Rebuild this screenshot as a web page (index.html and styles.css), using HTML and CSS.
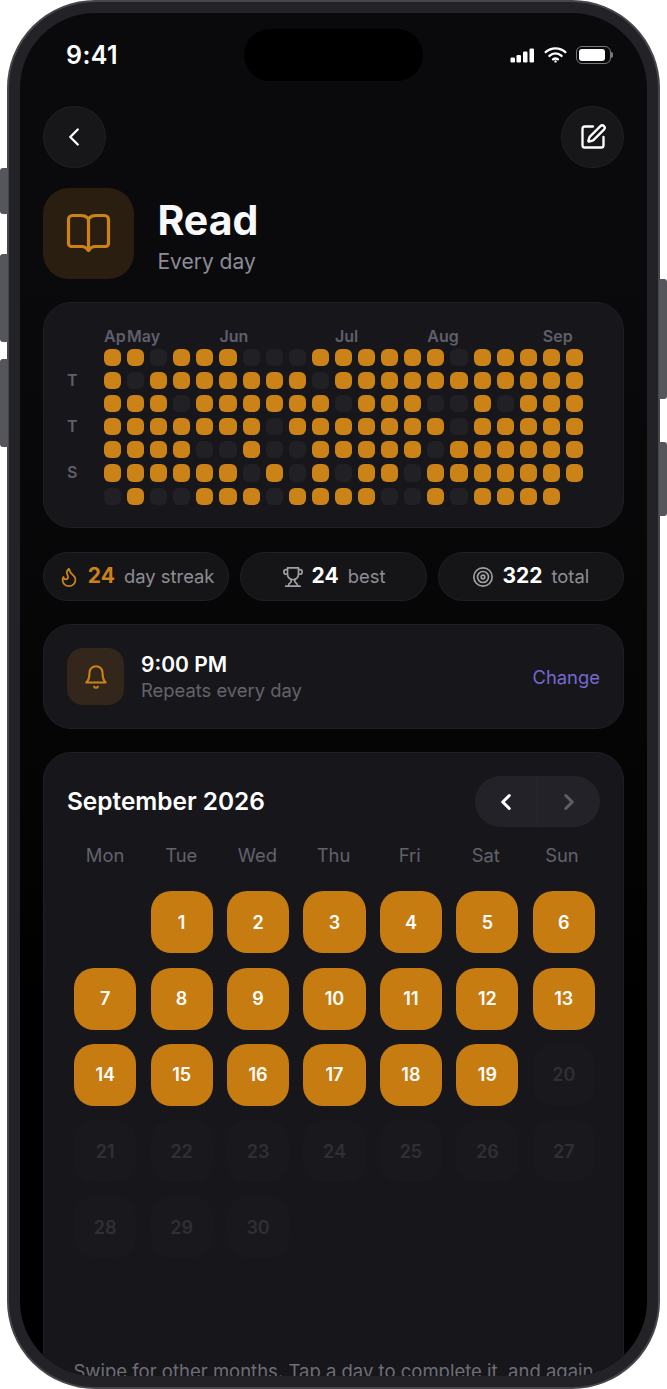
FILE: index.html
```html
<!DOCTYPE html>
<html>
<head>
    <meta charset="utf-8" />
    <meta name="viewport" content="width=device-width, initial-scale=1.0">
    <title>Read</title>
    <link rel="stylesheet" href="styles.css">
</head>
<body>
<div class="phone">
    <span class="side-btn side-mute"></span>
    <span class="side-btn side-vol-up"></span>
    <span class="side-btn side-vol-down"></span>
    <span class="side-btn side-power"></span>
    <span class="side-btn side-action"></span>

    <div class="screen">
        <div class="island"></div>

        <div class="status-bar">
            <span class="clock">9:41</span>
            <div class="status-icons">
                <svg class="signal" width="25" height="15" viewBox="0 0 25 15" fill="#fff">
                    <rect x="0.5" y="9.5" width="4.5" height="5" rx="1.2"/>
                    <rect x="6.5" y="7" width="4.5" height="7.5" rx="1.2"/>
                    <rect x="13" y="3.5" width="4.5" height="11" rx="1.2"/>
                    <rect x="19.5" y="0.5" width="4.5" height="14" rx="1.2"/>
                </svg>
                <svg class="wifi" width="23" height="16" viewBox="0 0 24 17" fill="none" stroke="#fff" stroke-width="2.4" stroke-linecap="round">
                    <path d="M1.5 5.5C7.5 0 16.5 0 22.5 5.5"/>
                    <path d="M5.5 9.5C9.5 6 14.5 6 18.5 9.5"/>
                    <path d="M9.3 13.2C11 12 13 12 14.7 13.2"/>
                    <circle cx="12" cy="15.3" r="0.6" fill="#fff" stroke-width="1.4"/>
                </svg>
                <div class="battery"><div class="battery-fill"></div></div>
            </div>
        </div>

        <div class="content">
            <div class="top-nav">
                <button class="round-btn">
                    <svg width="30" height="30" viewBox="0 0 24 24" fill="none" stroke="#fff" stroke-width="1.9" stroke-linecap="round" stroke-linejoin="round"><path d="m15 18-6-6 6-6"/></svg>
                </button>
                <button class="round-btn">
                    <svg width="28" height="28" viewBox="0 0 24 24" fill="none" stroke="#fff" stroke-width="2" stroke-linecap="round" stroke-linejoin="round"><path d="M12 3H5a2 2 0 0 0-2 2v14a2 2 0 0 0 2 2h14a2 2 0 0 0 2-2v-7"/><path d="M18.375 2.625a1 1 0 0 1 3 3l-9.013 9.014a2 2 0 0 1-.853.505l-2.873.84a.5.5 0 0 1-.62-.62l.84-2.873a2 2 0 0 1 .506-.852z"/></svg>
                </button>
            </div>

            <div class="hero">
                <div class="hero-icon">
                    <svg width="45" height="41" viewBox="0 0 45 41" fill="none" stroke="#cb8318" stroke-width="3.2" stroke-linejoin="round"><path d="M22.5 5.5C20.5 3.5 18 2.5 15 2.5H6.5A4 4 0 0 0 2.5 6.5V30.5A3 3 0 0 0 5.5 33.5H16C18.5 33.5 20.5 34.5 22.5 37.5C24.5 34.5 26.5 33.5 29 33.5H39.5A3 3 0 0 0 42.5 30.5V6.5A4 4 0 0 0 38.5 2.5H30C27 2.5 24.5 3.5 22.5 5.5ZM22.5 5.5V36"/></svg>
                </div>
                <div class="hero-text">
                    <h1 class="hero-title">Read</h1>
                    <div class="hero-sub">Every day</div>
                </div>
            </div>

            <div class="card heat-card">
                <div class="heat-months">
                    <span style="grid-column: 1">Ap</span>
                    <span style="grid-column: 2">May</span>
                    <span style="grid-column: 6">Jun</span>
                    <span style="grid-column: 11">Jul</span>
                    <span style="grid-column: 15">Aug</span>
                    <span style="grid-column: 20">Sep</span>
                </div>
                <div class="heat-body">
                    <div class="heat-days">
                        <span></span><span>T</span><span></span><span>T</span><span></span><span>S</span><span></span>
                    </div>
                    <div class="heat-grid">
                        <i class="on"></i><i class="on"></i><i></i><i class="on"></i><i class="on"></i><i class="on"></i><i></i><i></i><i></i><i class="on"></i><i class="on"></i><i class="on"></i><i class="on"></i><i class="on"></i><i class="on"></i><i></i><i class="on"></i><i class="on"></i><i class="on"></i><i class="on"></i><i class="on"></i>
                        <i class="on"></i><i></i><i class="on"></i><i class="on"></i><i class="on"></i><i class="on"></i><i class="on"></i><i class="on"></i><i class="on"></i><i></i><i class="on"></i><i class="on"></i><i class="on"></i><i class="on"></i><i class="on"></i><i class="on"></i><i class="on"></i><i class="on"></i><i class="on"></i><i class="on"></i><i class="on"></i>
                        <i class="on"></i><i class="on"></i><i class="on"></i><i></i><i class="on"></i><i class="on"></i><i class="on"></i><i class="on"></i><i class="on"></i><i class="on"></i><i></i><i class="on"></i><i class="on"></i><i class="on"></i><i></i><i></i><i class="on"></i><i></i><i class="on"></i><i class="on"></i><i class="on"></i>
                        <i class="on"></i><i class="on"></i><i class="on"></i><i class="on"></i><i class="on"></i><i class="on"></i><i class="on"></i><i></i><i class="on"></i><i class="on"></i><i class="on"></i><i class="on"></i><i class="on"></i><i class="on"></i><i class="on"></i><i></i><i class="on"></i><i class="on"></i><i class="on"></i><i class="on"></i><i class="on"></i>
                        <i class="on"></i><i class="on"></i><i class="on"></i><i class="on"></i><i></i><i></i><i class="on"></i><i></i><i></i><i class="on"></i><i class="on"></i><i class="on"></i><i class="on"></i><i class="on"></i><i></i><i class="on"></i><i class="on"></i><i class="on"></i><i class="on"></i><i class="on"></i><i class="on"></i>
                        <i class="on"></i><i class="on"></i><i class="on"></i><i class="on"></i><i class="on"></i><i class="on"></i><i></i><i class="on"></i><i></i><i class="on"></i><i></i><i class="on"></i><i class="on"></i><i></i><i class="on"></i><i class="on"></i><i class="on"></i><i class="on"></i><i class="on"></i><i class="on"></i><i class="on"></i>
                        <i></i><i class="on"></i><i></i><i></i><i class="on"></i><i class="on"></i><i class="on"></i><i></i><i class="on"></i><i class="on"></i><i class="on"></i><i class="on"></i><i></i><i></i><i class="on"></i><i></i><i class="on"></i><i class="on"></i><i class="on"></i><i class="on"></i>
                    </div>
                </div>
            </div>

            <div class="stats">
                <div class="stat">
                    <svg class="flame" width="22" height="22" viewBox="0 0 24 24" fill="none" stroke="#cb8318" stroke-width="1.9" stroke-linecap="round" stroke-linejoin="round"><path d="M8.5 14.5A2.5 2.5 0 0 0 11 12c0-1.38-.5-2-1-3-1.072-2.143-.224-4.054 2-6 .5 2.5 2 4.9 4 6.5 2 1.6 3 3.5 3 5.5a7 7 0 1 1-14 0c0-1.153.433-2.294 1-3a2.5 2.5 0 0 0 2.5 2.5z"/></svg>
                    <b class="stat-num stat-accent">24</b>
                    <span class="stat-label">day streak</span>
                </div>
                <div class="stat">
                    <svg width="22" height="22" viewBox="0 0 24 24" fill="none" stroke="#a0a0a5" stroke-width="1.8" stroke-linecap="round" stroke-linejoin="round"><path d="M6 9H4.5a2.5 2.5 0 0 1 0-5H6"/><path d="M18 9h1.5a2.5 2.5 0 0 0 0-5H18"/><path d="M4 22h16"/><path d="M10 14.66V17c0 .55-.47.98-.97 1.21C7.85 18.75 7 20.24 7 22"/><path d="M14 14.66V17c0 .55.47.98.97 1.21C16.15 18.75 17 20.24 17 22"/><path d="M18 2H6v7a6 6 0 0 0 12 0V2Z"/></svg>
                    <b class="stat-num">24</b>
                    <span class="stat-label">best</span>
                </div>
                <div class="stat">
                    <svg width="22" height="22" viewBox="0 0 24 24" fill="none" stroke="#a0a0a5" stroke-width="1.8"><circle cx="12" cy="12" r="10"/><circle cx="12" cy="12" r="6"/><circle cx="12" cy="12" r="2"/></svg>
                    <b class="stat-num">322</b>
                    <span class="stat-label">total</span>
                </div>
            </div>

            <div class="card reminder">
                <div class="reminder-icon">
                    <svg width="26" height="26" viewBox="0 0 24 24" fill="none" stroke="#cb8318" stroke-width="1.9" stroke-linecap="round" stroke-linejoin="round"><path d="M6 8a6 6 0 0 1 12 0c0 7 3 9 3 9H3s3-2 3-9"/><path d="M10.3 21a1.94 1.94 0 0 0 3.4 0"/></svg>
                </div>
                <div class="reminder-text">
                    <div class="reminder-time">9:00 PM</div>
                    <div class="reminder-sub">Repeats every day</div>
                </div>
                <a class="reminder-link">Change</a>
            </div>

            <div class="card calendar">
                <div class="cal-head">
                    <h2 class="cal-title">September 2026</h2>
                    <div class="cal-nav">
                        <button class="cal-arrow">
                            <svg width="26" height="26" viewBox="0 0 24 24" fill="none" stroke="#fff" stroke-width="2.8" stroke-linecap="round" stroke-linejoin="round"><path d="m15 18-6-6 6-6"/></svg>
                        </button>
                        <button class="cal-arrow cal-arrow-next">
                            <svg width="26" height="26" viewBox="0 0 24 24" fill="none" stroke="#5e5e64" stroke-width="2.8" stroke-linecap="round" stroke-linejoin="round"><path d="m9 18 6-6-6-6"/></svg>
                        </button>
                    </div>
                </div>
                <div class="cal-week">
                    <span>Mon</span><span>Tue</span><span>Wed</span><span>Thu</span><span>Fri</span><span>Sat</span><span>Sun</span>
                </div>
                <div class="cal-grid">
                    <div class="day-blank"></div>
                    <div class="day done">1</div>
                    <div class="day done">2</div>
                    <div class="day done">3</div>
                    <div class="day done">4</div>
                    <div class="day done">5</div>
                    <div class="day done">6</div>
                    <div class="day done">7</div>
                    <div class="day done">8</div>
                    <div class="day done">9</div>
                    <div class="day done">10</div>
                    <div class="day done">11</div>
                    <div class="day done">12</div>
                    <div class="day done">13</div>
                    <div class="day done">14</div>
                    <div class="day done">15</div>
                    <div class="day done">16</div>
                    <div class="day done">17</div>
                    <div class="day done">18</div>
                    <div class="day done">19</div>
                    <div class="day">20</div>
                    <div class="day">21</div>
                    <div class="day">22</div>
                    <div class="day">23</div>
                    <div class="day">24</div>
                    <div class="day">25</div>
                    <div class="day">26</div>
                    <div class="day">27</div>
                    <div class="day">28</div>
                    <div class="day">29</div>
                    <div class="day">30</div>
                    <div class="day-blank"></div>
                    <div class="day-blank"></div>
                    <div class="day-blank"></div>
                    <div class="day-blank"></div>
                    <div class="day-blank"></div>
                </div>
                <p class="cal-hint">Swipe for other months. Tap a day to complete it, and again to undo.</p>
            </div>
        </div>
    </div>
</div>
</body>
</html>
```

FILE: styles.css
```css
* {
    box-sizing: border-box;
}
body {
    margin: 0;
    background: #fff;
    font-family: Inter, "Liberation Sans", sans-serif;
    color: #fff;
}
button {
    border: none;
    padding: 0;
    background: none;
    font: inherit;
}
h1, h2, p {
    margin: 0;
}

/* device frame */
.phone {
    position: relative;
    width: 653px;
    height: 1389px;
    margin-left: 7px;
    padding: 11px;
    border: 2px solid #46464c;
    border-radius: 88px;
    background: #232327;
}
.side-btn {
    position: absolute;
    width: 8px;
    background: #55555c;
}
.side-mute {
    left: -9px;
    top: 166px;
    height: 46px;
    border-radius: 3px 0 0 3px;
}
.side-vol-up {
    left: -9px;
    top: 252px;
    height: 88px;
    border-radius: 3px 0 0 3px;
}
.side-vol-down {
    left: -9px;
    top: 357px;
    height: 88px;
    border-radius: 3px 0 0 3px;
}
.side-power {
    right: -9px;
    top: 277px;
    height: 120px;
    border-radius: 0 3px 3px 0;
}
.side-action {
    right: -9px;
    top: 440px;
    height: 74px;
    border-radius: 0 3px 3px 0;
}
.screen {
    position: relative;
    height: 100%;
    overflow: hidden;
    border-radius: 75px;
    background: linear-gradient(#0a0a0c 0, #0a0a0c 240px, #040405 800px, #000 1000px);
}
.island {
    position: absolute;
    left: 224px;
    top: 16px;
    width: 179px;
    height: 52px;
    border-radius: 26px;
    background: #000;
}

/* status bar */
.status-bar {
    display: flex;
    align-items: center;
    justify-content: space-between;
    height: 84px;
    margin-bottom: 9px;
    padding: 0 36px 0 46px;
}
.clock {
    font-size: 25px;
    font-weight: 600;
    letter-spacing: 0.4px;
}
.status-icons {
    display: flex;
    align-items: center;
    gap: 9px;
}
.battery {
    position: relative;
    width: 35px;
    height: 18px;
    padding: 2px;
    border: 1px solid #77777c;
    border-radius: 6px;
}
.battery::after {
    content: "";
    position: absolute;
    right: -3px;
    top: 5px;
    width: 2px;
    height: 6px;
    border-radius: 0 2px 2px 0;
    background: #77777c;
}
.battery-fill {
    width: 26px;
    height: 100%;
    border-radius: 3px;
    background: #fff;
}

.content {
    padding: 0 23px;
}
.top-nav {
    display: flex;
    justify-content: space-between;
}
.round-btn {
    display: flex;
    align-items: center;
    justify-content: center;
    width: 62.6px;
    height: 62px;
    border: 1px solid #202024;
    border-radius: 50%;
    background: #17171a;
}

.hero {
    display: flex;
    align-items: center;
    gap: 23.4px;
    margin-top: 20px;
}
.hero-icon {
    display: flex;
    align-items: center;
    justify-content: center;
    width: 91px;
    height: 91px;
    border-radius: 26px;
    background: #2a1e10;
}
.hero-text {
    padding-top: 2px;
}
.hero-title {
    font-size: 41px;
    line-height: 50px;
    font-weight: 700;
    color: #f8f8fa;
}
.hero-sub {
    margin-top: 4px;
    font-size: 21px;
    line-height: 26px;
    color: #8c8c98;
}

.card {
    border: 1px solid #1f1f23;
    border-radius: 28px;
    background: #17171b;
}

/* habit heatmap */
.heat-card {
    height: 226px;
    margin-top: 23px;
    padding: 23px;
}
.heat-months {
    display: grid;
    grid-template-columns: repeat(21, 17.1px);
    column-gap: 6px;
    height: 20px;
    margin-left: 37px;
    font-size: 16px;
    line-height: 20px;
    font-weight: 600;
    color: #5f5f6b;
    white-space: nowrap;
}
.heat-body {
    display: flex;
    margin-top: 3px;
}
.heat-days {
    display: grid;
    grid-template-rows: repeat(7, 17.1px);
    row-gap: 6px;
    width: 37px;
    font-size: 16px;
    line-height: 17px;
    font-weight: 600;
    color: #5f5f6b;
}
.heat-grid {
    display: grid;
    grid-template-columns: repeat(21, 17.1px);
    grid-auto-rows: 17.1px;
    gap: 6px;
}
.heat-grid i {
    border-radius: 6px;
    background: #212125;
}
.heat-grid .on {
    background: #cb8318;
}

/* stat pills */
.stats {
    display: flex;
    gap: 11px;
    margin-top: 24px;
}
.stat {
    display: flex;
    flex: 1 1 0;
    align-items: center;
    justify-content: center;
    gap: 8px;
    height: 49px;
    border: 1px solid #202024;
    border-radius: 25px;
    background: #151518;
}
.stat-num {
    margin: 0 1px 2px 0;
    font-size: 21px;
    font-weight: 700;
}
.stat-accent {
    color: #cb8318;
}
.stat-label {
    margin-bottom: 2px;
    font-size: 18.4px;
    color: #8e8e93;
}

/* reminder */
.reminder {
    display: flex;
    align-items: center;
    gap: 17px;
    height: 105px;
    margin-top: 23px;
    padding: 0 23px;
}
.reminder-icon {
    display: flex;
    align-items: center;
    justify-content: center;
    width: 57px;
    height: 57px;
    border-radius: 16px;
    background: #33261a;
}
.reminder-text {
    flex: 1;
    padding-top: 1px;
}
.reminder-time {
    font-size: 21px;
    line-height: 26px;
    font-weight: 600;
}
.reminder-sub {
    font-size: 18.4px;
    line-height: 24px;
    color: #63636b;
}
.reminder-link {
    font-size: 18.4px;
    font-weight: 400;
    color: #7469cf;
}

/* month calendar, runs past the bottom of the screen */
.calendar {
    margin-top: 23px;
    padding: 23px;
}
.cal-head {
    display: flex;
    align-items: center;
    justify-content: space-between;
}
.cal-title {
    margin-bottom: 2px;
    font-size: 24.4px;
    font-weight: 600;
}
.cal-nav {
    display: flex;
    width: 125px;
    height: 51px;
    border-radius: 26px;
    background: #222228;
}
.cal-arrow {
    display: flex;
    flex: 1;
    align-items: center;
    justify-content: center;
}
.cal-arrow-next {
    border-left: 1px solid #27272d;
}
.cal-week {
    display: grid;
    grid-template-columns: repeat(7, 1fr);
    margin-top: 17px;
    font-size: 18.4px;
    line-height: 22px;
    text-align: center;
    color: #62626b;
}
.cal-grid {
    display: grid;
    grid-template-columns: repeat(7, 1fr);
    row-gap: 14.3px;
    margin: 25.3px -2px 0 0;
}
.day,
.day-blank {
    height: 62px;
    margin: 0 7.2px;
}
.day {
    display: flex;
    align-items: center;
    justify-content: center;
    border-radius: 20px;
    background: #19191d;
    font-size: 18px;
    font-weight: 600;
    color: #2f2f34;
}
.day.done {
    background: #c77c11;
    color: #fff;
}
.cal-hint {
    margin-top: 24px;
    font-size: 18.5px;
    line-height: 24px;
    text-align: center;
    color: #6e6e78;
}
```
